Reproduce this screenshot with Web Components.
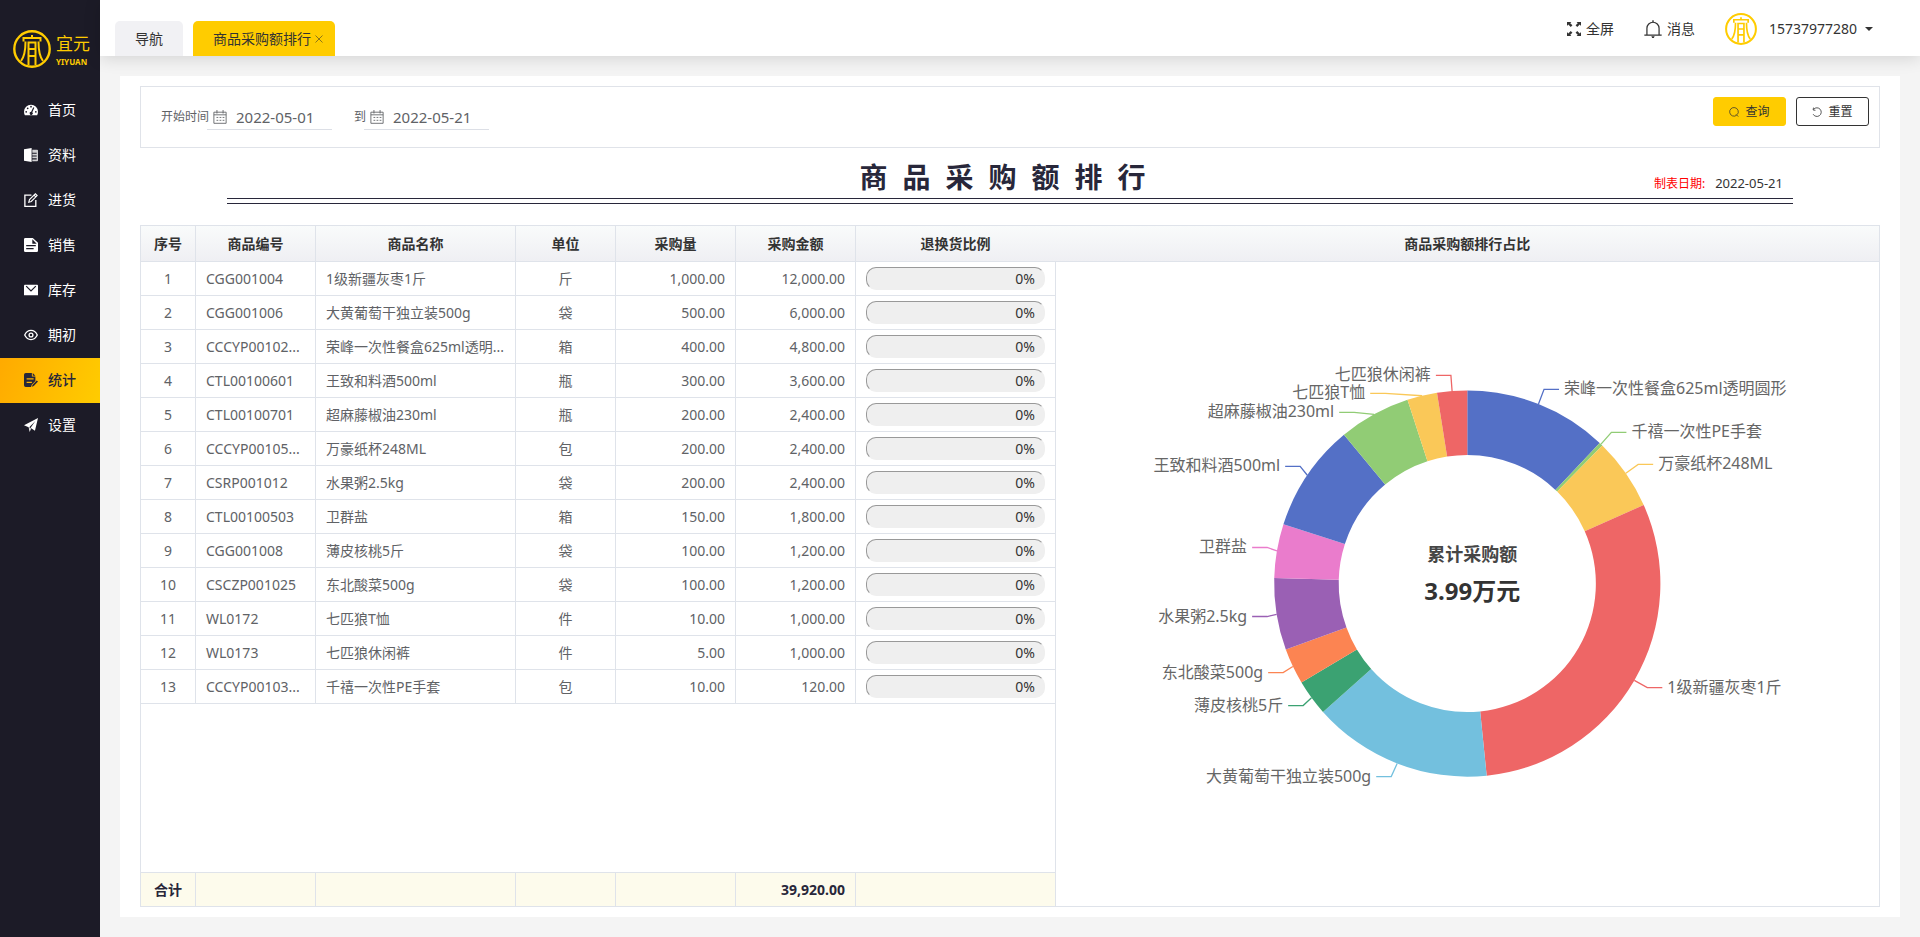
<!DOCTYPE html>
<html lang="zh-CN">
<head>
<meta charset="utf-8">
<meta name="viewport" content="width=device-width, initial-scale=1">
<title>商品采购额排行</title>
<style>
body{margin:0;font-family:"Noto Sans","Noto Sans CJK SC",sans-serif;font-size:14px;line-height:20px;color:#333;background:#f4f4f4}
</style>
</head>
<body>
<app-shell>
  <side-nav slot="side"></side-nav>
  <top-bar slot="top"></top-bar>
  <report-page></report-page>
</app-shell>
<script>
const define = (name, html, setup) => customElements.define(name, class extends HTMLElement {
  connectedCallback() {
    if (this.shadowRoot) return;
    const root = this.attachShadow({ mode: 'open' });
    root.innerHTML = typeof html === 'function' ? html(this) : html;
    if (setup) setup(root, this);
  }
});

/* ---------- data ---------- */
const rows = [
  ['CGG001004', '1级新疆灰枣1斤', '斤', '1,000.00', '12,000.00'],
  ['CGG001006', '大黄葡萄干独立装500g', '袋', '500.00', '6,000.00'],
  ['CCCYP00102...', '荣峰一次性餐盒625ml透明...', '箱', '400.00', '4,800.00'],
  ['CTL00100601', '王致和料酒500ml', '瓶', '300.00', '3,600.00'],
  ['CTL00100701', '超麻藤椒油230ml', '瓶', '200.00', '2,400.00'],
  ['CCCYP00105...', '万豪纸杯248ML', '包', '200.00', '2,400.00'],
  ['CSRP001012', '水果粥2.5kg', '袋', '200.00', '2,400.00'],
  ['CTL00100503', '卫群盐', '箱', '150.00', '1,800.00'],
  ['CGG001008', '薄皮核桃5斤', '袋', '100.00', '1,200.00'],
  ['CSCZP001025', '东北酸菜500g', '袋', '100.00', '1,200.00'],
  ['WL0172', '七匹狼T恤', '件', '10.00', '1,000.00'],
  ['WL0173', '七匹狼休闲裤', '件', '5.00', '1,000.00'],
  ['CCCYP00103...', '千禧一次性PE手套', '包', '10.00', '120.00']
];
/* name, amount, and where needed the elbow of its leader line: x, y */
const slices = [
  ['荣峰一次性餐盒625ml透明圆形', 4800], ['千禧一次性PE手套', 120], ['万豪纸杯248ML', 2400],
  ['1级新疆灰枣1斤', 12000], ['大黄葡萄干独立装500g', 6000, 336], ['薄皮核桃5斤', 1200, 248],
  ['东北酸菜500g', 1200, 228], ['水果粥2.5kg', 2400, 212], ['卫群盐', 1800, 212], ['王致和料酒500ml', 3600, 245],
  ['超麻藤椒油230ml', 2400, 299, 150], ['七匹狼T恤', 1000, 330, 131], ['七匹狼休闲裤', 1000]
];
const palette = ['#5470c6', '#91cc75', '#fac858', '#ee6666', '#73c0de', '#3ba272', '#fc8452', '#9a60b4', '#ea7ccc'];

/* ---------- icons ---------- */
const icons = {
  gauge: '<path fill="currentColor" fill-rule="evenodd" d="M8 2a8 8 0 0 0-8 8c0 1.500.4 2.900 1 4h14c.6-1.100 1-2.500 1-4a8 8 0 0 0-8-8zM8 3.200a1 1 0 1 1 0 2 1 1 0 0 1 0-2zM4.200 5a1 1 0 1 1 0 2 1 1 0 0 1 0-2zM2.500 9a1 1 0 1 1 0 2 1 1 0 0 1 0-2zM13.500 9a1 1 0 1 1 0 2 1 1 0 0 1 0-2zM10.600 4.800l1.200.5-2.300 5.200a1.800 1.800 0 1 1-1.300-.5z"/>',
  book: '<path fill="currentColor" d="M0 1.500 8.700 0v16L0 14.500z"/><path fill="currentColor" opacity=".8" d="M9.500 2H15a1 1 0 0 1 1 1v11a1 1 0 0 1-1 1H9.500v-2h5v-1.200h-5v-2h5V8.600h-5v-2h5V5.400h-5z"/>',
  edit: '<path fill="none" stroke="currentColor" stroke-width="1.500" d="M8.500 2.500H1v12.700h12.500V8"/><path fill="none" stroke="currentColor" stroke-width="1.300" d="m5.500 10.500.8-3L13 .9l2 2-6.700 6.800zM11.500 2.500l2 2"/>',
  file: '<path fill="currentColor" fill-rule="evenodd" d="M1.500 0H10l6 5.500v9a1.500 1.500 0 0 1-1.500 1.500h-13A1.500 1.500 0 0 1 0 14.500v-13A1.500 1.500 0 0 1 1.500 0zM9.500 1.500v5h5zM2.500 8v1.400h11V8zM2.500 11.500v1.400H11v-1.400z"/>',
  mail: '<path fill="currentColor" d="M1 2h14a1 1 0 0 1 1 1v11H0V3a1 1 0 0 1 1-1z"/><path fill="none" stroke="#1c1b27" stroke-width="1.400" d="m2.500 3.500 5.500 5.500 5.500-5.500"/>',
  eye: '<path fill="none" stroke="currentColor" stroke-width="1.500" d="M.8 8C2.500 4.500 5 2.800 8 2.800S13.500 4.500 15.200 8c-1.700 3.500-4.200 5.200-7.200 5.200S2.500 11.500.8 8z"/><circle cx="8" cy="8" r="2.200" fill="none" stroke="currentColor" stroke-width="1.500"/>',
  stats: '<path fill="currentColor" fill-rule="evenodd" d="M2 0h7v4h4v5l-4 4-1 3H2a2 2 0 0 1-2-2V2a2 2 0 0 1 2-2zM3 6v1.300h8V6zM3 10v1.300h6V10z"/><path fill="currentColor" d="M10 0l3 3h-3zM14.500 8.500 16 9.700l-4.800 5.100-2.200.9.800-2.300z"/>',
  send: '<path fill="currentColor" fill-rule="evenodd" d="M16 0 12.500 14.500 8.200 11.800 6.500 16 5.300 10.600 0 8.300zM13 3.300 6.300 10.300l.5 2.200 1-1.700z"/>',
  full: '<g fill="currentColor"><path d="M0 0h5L3.700 1.300l2.500 2.500-1.900 1.900-2.900-2.900L0 4.500zM16 0v4.500l-1.400-1.700-2.900 2.900-1.900-1.900 2.500-2.500L11 0zM0 16v-4.500l1.400 1.700 2.900-2.900 1.900 1.900-2.500 2.500L5 16zM16 16h-5l1.300-1.300-2.500-2.500 1.900-1.900 2.900 2.900 1.400-1.700z"/></g>',
  bell: '<path fill="none" stroke="currentColor" stroke-width="1.100" d="M.3 13.500h15.400M2.600 13.500V7.400a5.400 5.400 0 0 1 10.800 0v6.100"/><path fill="currentColor" d="M7.400.2h1.200v1.900H7.400zM6.500 14.500h3L8.700 16H7.300z"/>',
  calendar: '<path fill="none" stroke="currentColor" d="M1 2.500h14v12.700H1zM1 5.500h14M4.500 0v4M11.500 0v4"/><path stroke="currentColor" stroke-dasharray="2 1.500" d="M4 8.500h9M4 11.800h9"/>',
  search: '<path fill="none" stroke="currentColor" stroke-width="1.200" d="M12.200 13.200a6.900 6.900 0 1 1 1.200-1.200M11 11.500l3.800 3.800"/>',
  reset: '<path fill="none" stroke="currentColor" stroke-width="1.300" d="M2.800 3.500a6.900 6.900 0 1 1-1 8M5.500 5.300l-3.700-.5L2.400 1"/>',
  close: '<path stroke="currentColor" stroke-width="1.500" d="m1 1 14 14M15 1 1 15"/>',
  seal: '<g fill="none" stroke="#fc0"><circle cx="19" cy="19" r="17.700" stroke-width="2.400"/><path stroke-width="2" d="M19 5v3M10.500 11.500V8h17v3.500M12.500 11.500c0 9-1 15-4.500 19.500M25.500 11.500c0 9 1 15 4.500 19.500M15.500 35V12.500h7V35M15.500 19h7M15.500 26h7"/></g>'
};
define('ui-icon', el => `<style>:host{display:block;flex:none;width:14px;height:14px}svg{display:block;width:100%;height:100%}</style>
<svg viewBox="${el.getAttribute('name') === 'seal' ? '0 0 38 38' : '0 0 16 16'}" aria-hidden="true">${icons[el.getAttribute('name')]}</svg>`);

/* ---------- frame ---------- */
define('app-shell', `<style>
:host{display:grid;grid-template-columns:100px minmax(0,1fr);grid-template-rows:56px 1fr;min-height:100vh}
.side{grid-row:1/3;display:grid}
.top{z-index:1;box-shadow:0 2px 16px rgba(0,0,0,.14)}
main{display:grid;padding:20px}
</style>
<div class="side"><slot name="side"></slot></div><div class="top"><slot name="top"></slot></div><main><slot></slot></main>`);

define('side-nav', () => `<style>
:host{display:block;background:#1c1b27;color:#fff}
.logo{display:flex;height:88px;box-sizing:border-box;padding:30px 0 0 13px;gap:5px;color:#fc0}
.logo ui-icon{width:38px;height:38px}
.word{font-size:17px;line-height:28px}
.word small{display:block;font:bold 8px/8px "Noto Sans",sans-serif}
a{display:flex;align-items:center;gap:10px;height:45px;box-sizing:border-box;padding:0 0 2px 24px;color:inherit;text-decoration:none}
a[aria-current]{background:linear-gradient(110deg,#fa0,#fc0);color:#28273a;font-weight:500}
</style>
<div class="logo"><ui-icon name="seal"></ui-icon><div class="word">宜元<small>YIYUAN</small></div></div>
<nav>${[['gauge', '首页'], ['book', '资料'], ['edit', '进货'], ['file', '销售'], ['mail', '库存'], ['eye', '期初'], ['stats', '统计'], ['send', '设置']]
  .map(([i, t]) => `<a href="#"${t === '统计' ? ' aria-current="page"' : ''}><ui-icon name="${i}"></ui-icon>${t}</a>`).join('')}</nav>`);

define('top-bar', `<style>
:host{display:flex;justify-content:space-between;height:56px;background:#fff}
nav{display:flex;align-items:flex-end;gap:10px;padding-left:15px}
.tab{display:flex;align-items:center;height:35px;padding:0 20px;border-radius:5px 5px 0 0;background:#f1f1f4}
.tab.on{background:#fc0;padding-right:12px}
a,button{color:#333;text-decoration:none;font:inherit;background:none;border:0;padding:0}
.tab button{margin-left:4px;color:#665a20}
.tab ui-icon{width:8px;height:8px}
.tools{display:flex;align-items:center;height:56px;box-sizing:border-box;padding:2px 47px 0 0}
.tools button{display:flex;align-items:center;gap:5px;margin-left:30px}
.tools .user{gap:12px}
.bell{width:18px;height:18px}
.seal{width:32px;height:32px}
.caret{border:4px solid transparent;border-top-color:#333;border-bottom:0;margin-left:-4px}
</style>
<nav><div class="tab"><a href="#">导航</a></div><div class="tab on"><a href="#">商品采购额排行</a><button aria-label="关闭"><ui-icon name="close"></ui-icon></button></div></nav>
<div class="tools"><button><ui-icon name="full"></ui-icon>全屏</button><button><ui-icon class="bell" name="bell"></ui-icon>消息</button><button class="user"><ui-icon class="seal" name="seal"></ui-icon>15737977280<span class="caret"></span></button></div>`);

/* ---------- report ---------- */
define('report-page', `<style>
:host{display:flex;flex-direction:column;background:#fff;padding:10px 20px;min-width:0}
.split{display:flex;flex:1}
rank-table{flex:916 1 0;min-width:0}
share-chart{flex:824 1 0;min-width:0}
</style>
<filter-bar></filter-bar><report-title></report-title><div class="split"><rank-table></rank-table><share-chart></share-chart></div>`);

define('filter-bar', `<style>
:host{display:flex;justify-content:space-between;box-sizing:border-box;height:62px;border:1px solid #e0e3e9;padding:10px;color:#606266;font-size:12px}
form,label,.field,.acts,button{display:flex}
form{padding:5px 0 0 10px;gap:22px;height:28px}
label{align-items:flex-end;line-height:26px}
.field{align-items:center;width:125px;height:28px;gap:9px;padding:2px 0 0 6px;box-sizing:border-box;border-bottom:1px solid #dcdfe6;margin-left:-2px}
input{flex:1;min-width:0;border:0;outline:0;padding:0;font:15px/20px "Noto Sans",sans-serif;color:#606266}
.acts{gap:10px}
button{align-items:center;justify-content:center;gap:6px;width:73px;height:29px;border:1px solid #333;border-radius:3px;background:#fff;color:#333;font:inherit;padding:0}
button.go{background:#fc0;border-color:#fc0}
button ui-icon{width:10px;height:10px}
</style>
<form><label for="from">开始时间<span class="field"><ui-icon name="calendar"></ui-icon><input id="from" value="2022-05-01"></span></label>
<label for="to">到<span class="field"><ui-icon name="calendar"></ui-icon><input id="to" value="2022-05-21"></span></label></form>
<div class="acts"><button class="go"><ui-icon name="search"></ui-icon>查询</button><button><ui-icon name="reset"></ui-icon>重置</button></div>`);

define('report-title', `<style>
:host{display:block;height:77px}
header{display:grid;grid-template-columns:1fr auto 1fr;width:90%;height:51px;margin:0 auto;box-sizing:border-box;padding-top:9px;color:#28273a;border-bottom:1px solid #28273a}
h1{grid-column:2;margin:0;font-size:28px;line-height:40px;letter-spacing:15px}
p{margin:16px 10px 0 0;justify-self:end;font-size:12px;color:#333}
time{font-size:13px}
b{font-weight:400;color:#f00;margin-right:10px}
hr{width:90%;height:0;margin:4px auto 0;border:0;border-top:1px solid #28273a}
</style>
<header><h1>商品采购额排行</h1><p><b>制表日期:</b><time>2022-05-21</time></p></header><hr>`);

define('rank-table', () => `<style>
:host{display:grid}
table{width:100%;height:100%;table-layout:fixed;border-collapse:separate;border-spacing:0;border:1px solid #dfe3ea;border-width:1px 0 0 1px;color:#606266}
th,td{box-sizing:border-box;height:34px;padding:0 10px;border:1px solid #dfe3ea;border-width:0 1px 1px 0;text-align:center;overflow:hidden;white-space:nowrap;text-overflow:ellipsis}
thead th{height:36px;color:#333;background:linear-gradient(#f9fbfb,#efeff3)}
.l{text-align:left}.r{text-align:right}
.fill td{height:auto}
tfoot td{background:#fdfbec;color:#28273a;font-weight:700}
</style>
<table><colgroup>${[55, 120, 200, 100, 120, 120, 200].map(w => `<col style="width:${w}px">`).join('')}</colgroup>
<thead><tr>${['序号', '商品编号', '商品名称', '单位', '采购量', '采购金额', '退换货比例'].map(t => `<th>${t}</th>`).join('')}</tr></thead>
<tbody>${rows.map((r, i) => `<tr><td>${i + 1}</td><td class="l">${r[0]}</td><td class="l">${r[1]}</td><td>${r[2]}</td><td class="r">${r[3]}</td><td class="r">${r[4]}</td><td><ratio-bar>0%</ratio-bar></td></tr>`).join('')}
<tr class="fill"><td colspan="7"></td></tr></tbody>
<tfoot><tr><td>合计</td><td></td><td></td><td></td><td></td><td class="r">39,920.00</td><td></td></tr></tfoot></table>`);

define('ratio-bar', `<style>
:host{display:block;box-sizing:border-box;height:23px;line-height:21px;padding:0 9px;border:1px solid #efefef;border-top-color:#999;border-left-color:#999;border-radius:10px;background:#efefef;color:#333;text-align:right}
</style><slot></slot>`);

define('share-chart', () => {
  const R = 193, r = 128.5, cx = 412, cy = 321, total = slices.reduce((s, d) => s + d[1], 0);
  const at = (rad, a) => [cx + rad * Math.sin(a), cy - rad * Math.cos(a)];
  let a = 0, arcs = '', labels = '';
  slices.forEach(([name, v, ex, ey], i) => {
    const b = a + v / total * 2 * Math.PI, m = (a + b) / 2, big = b - a > Math.PI ? 1 : 0, c = palette[i % 9];
    arcs += `<path fill="${c}" d="M${at(R, a)}A${R} ${R} 0 ${big} 1 ${at(R, b)}L${at(r, b)}A${r} ${r} 0 ${big} 0 ${at(r, a)}Z"/>`;
    const side = m < Math.PI ? 1 : -1, elbow = at(R + 15, m);
    const x = ex || elbow[0], y = Math.floor(ey || elbow[1]);
    labels += `<path fill="none" stroke="${c}" stroke-width="1.300" d="M${at(R, m)}L${x} ${y}h${15 * side}"/><text x="${x + 20 * side}" y="${y + 5}" text-anchor="${side > 0 ? 'start' : 'end'}">${name}</text>`;
    a = b;
  });
  return `<style>
:host{display:flex;flex-direction:column;box-sizing:border-box;border:1px solid #dfe3ea;border-left:0}
h2{box-sizing:border-box;height:36px;margin:0;font-size:14px;line-height:35px;text-align:center;border-bottom:1px solid #dfe3ea;background:linear-gradient(#f9fbfb,#efeff3)}
.plot{flex:1 1 0;min-height:400px;display:grid}
svg{width:100%;height:100%;min-height:0;font-size:16px;fill:#666}
.sum{font-size:18px;font-weight:700;fill:#464646}.num{font-size:24px;font-weight:700;fill:#333}
</style>
<h2>商品采购额排行占比</h2><div class="plot"><svg viewBox="0 0 823 643" role="img" aria-label="商品采购额排行占比">${arcs}${labels}
<text class="sum" x="417" y="299" text-anchor="middle">累计采购额</text><text class="num" x="417" y="338" text-anchor="middle">3.99万元</text></svg></div>`;
});
</script>
</body>
</html>
